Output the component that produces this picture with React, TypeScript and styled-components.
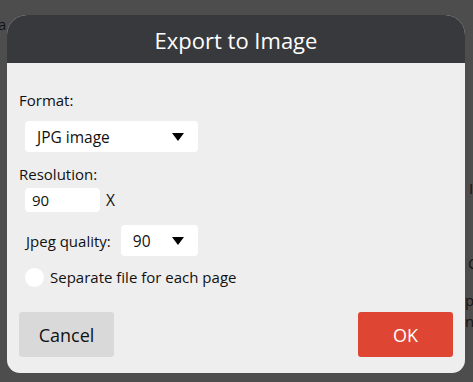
import React from "react";
import styled, { createGlobalStyle } from "styled-components";

const Global = createGlobalStyle`
  html, body { margin: 0; padding: 0; }
  body { font-family: "Open Sans", "Liberation Sans", sans-serif; }
  * { box-sizing: border-box; }
`;

const Page = styled.div`
  position: relative;
  width: 473px;
  height: 382px;
  overflow: hidden;
  background: #4d4d4d;
`;

const Backdrop = styled.div`
  position: absolute;
  inset: 0;
  color: #141414;
  font-size: 15px;
`;

const Ghost = styled.span<{ $x: number; $y: number }>`
  position: absolute;
  left: ${(p) => p.$x}px;
  top: ${(p) => p.$y}px;
  line-height: 1;
`;

const Dialog = styled.div`
  position: absolute;
  left: 7px;
  top: 15px;
  width: 458px;
  height: 358px;
  background: #eeeeee;
  border-radius: 20px 20px 13px 13px;
  overflow: hidden;
  display: flex;
  flex-direction: column;
`;

const Header = styled.div`
  height: 48px;
  background: #38393c;
  color: #ffffff;
  font-size: 22px;
  display: flex;
  align-items: center;
  justify-content: center;
  padding-top: 2px;
`;

const Body = styled.div`
  flex: 1;
  padding: 27px 12px 0 12px;
  display: flex;
  flex-direction: column;
  color: #111;
  font-size: 15px;
  line-height: 20px;
`;

const Label = styled.div`
  height: 20px;
`;

const Select = styled.div<{ $w: number; $h: number }>`
  width: ${(p) => p.$w}px;
  height: ${(p) => p.$h}px;
  background: #fff;
  border-radius: 4px;
  display: flex;
  align-items: center;
  justify-content: space-between;
  padding: 0 14px 0 12px;
  font-size: 15.5px;
`;

const Arrow = styled.span`
  width: 0;
  height: 0;
  border-left: 6px solid transparent;
  border-right: 6px solid transparent;
  border-top: 8px solid #000;
`;

const Row = styled.div<{ $mt: number; $ml: number }>`
  display: flex;
  align-items: center;
  margin-top: ${(p) => p.$mt}px;
  margin-left: ${(p) => p.$ml}px;
`;

const Input = styled.div`
  width: 75px;
  height: 24px;
  background: #fff;
  border-radius: 4px;
  padding-left: 7px;
  display: flex;
  align-items: center;
  font-size: 15px;
`;

const Times = styled.span`
  margin-left: 6px;
  font-size: 15.5px;
`;

const QualityLabel = styled.span`
  margin-right: 10px;
`;

const Radio = styled.span`
  width: 19px;
  height: 19px;
  border-radius: 50%;
  background: #fff;
  margin-right: 6px;
`;

const Footer = styled.div`
  display: flex;
  justify-content: space-between;
  margin-top: 25px;
`;

const Button = styled.button<{ $primary?: boolean }>`
  width: 95px;
  height: 45px;
  border: none;
  border-radius: 3px;
  font-family: inherit;
  font-size: 18px;
  background: ${(p) => (p.$primary ? "#df4533" : "#d9d9d9")};
  color: ${(p) => (p.$primary ? "#fff" : "#111")};
  padding: 0;
`;

export default function App() {
  return (
    <>
      <Global />
      <Page>
        <Backdrop>
          <Ghost $x={-2} $y={17}>a ab</Ghost>
          <Ghost $x={469} $y={181}>I</Ghost>
          <Ghost $x={468} $y={256}>C</Ghost>
          <Ghost $x={465} $y={293}>p</Ghost>
          <Ghost $x={465} $y={314}>n</Ghost>
        </Backdrop>
        <Dialog>
          <Header>Export to Image</Header>
          <Body>
            <Label>Format:</Label>
            <Row $mt={11} $ml={6}>
              <Select $w={173} $h={31}>
                <span>JPG image</span>
                <Arrow />
              </Select>
            </Row>
            <Row $mt={12} $ml={0}>
              <Label>Resolution:</Label>
            </Row>
            <Row $mt={4} $ml={6}>
              <Input>90</Input>
              <Times>X</Times>
            </Row>
            <Row $mt={13} $ml={7}>
              <QualityLabel>Jpeg quality:</QualityLabel>
              <Select $w={77} $h={31}>
                <span>90</span>
                <Arrow />
              </Select>
            </Row>
            <Row $mt={11} $ml={6}>
              <Radio />
              <span>Separate file for each page</span>
            </Row>
            <Footer>
              <Button>Cancel</Button>
              <Button $primary>OK</Button>
            </Footer>
          </Body>
        </Dialog>
      </Page>
    </>
  );
}
